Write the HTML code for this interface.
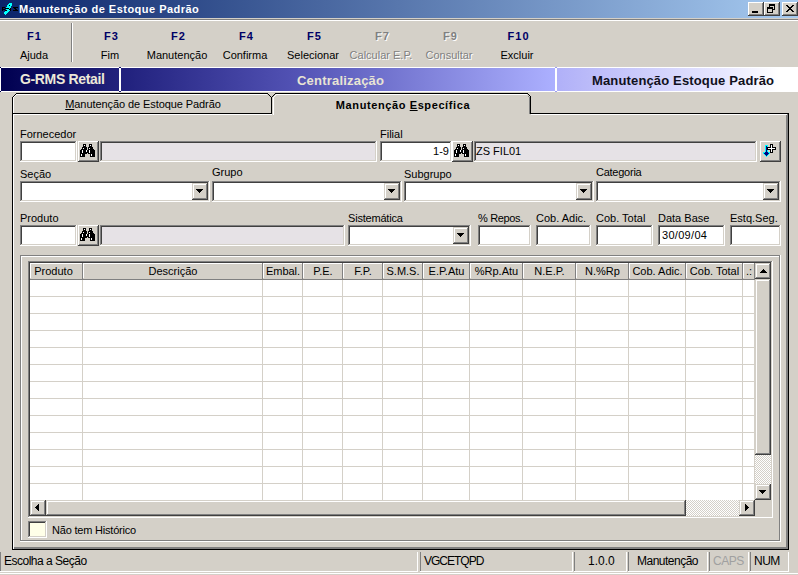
<!DOCTYPE html><html><head><meta charset="utf-8"><style>
html,body{margin:0;padding:0;}
body{width:798px;height:575px;overflow:hidden;position:relative;background:#d4d0c8;font-family:"Liberation Sans",sans-serif;font-size:11px;}
div,span,svg{position:absolute;}
.t{white-space:nowrap;line-height:13px;}
</style></head><body>
<div style="left:0;top:0;width:798px;height:18px;background:linear-gradient(to right,#0a246a 0%,#a6caf0 100%);"></div>
<div style="left:0px;top:18px;width:798px;height:1px;background:#d4d0c8;"></div>
<div style="left:0px;top:19px;width:798px;height:1px;background:#808080;"></div>
<div style="left:0px;top:20px;width:798px;height:1px;background:#ffffff;"></div>
<span class="t " style="left:19px;top:3px;font-size:11px;font-weight:bold;color:#fff;letter-spacing:0.48px;">Manutenção de Estoque Padrão</span>
<div style="left:9px;top:3px;width:3px;height:1px;background:#00ffff;"></div>
<div style="left:8px;top:4px;width:4px;height:1px;background:#00ffff;"></div>
<div style="left:7px;top:5px;width:2px;height:1px;background:#00ffff;"></div>
<div style="left:9px;top:5px;width:1px;height:1px;background:#000;"></div>
<div style="left:10px;top:5px;width:2px;height:1px;background:#00ffff;"></div>
<div style="left:7px;top:6px;width:4px;height:1px;background:#00ffff;"></div>
<div style="left:2px;top:7px;width:3px;height:1px;background:#000;"></div>
<div style="left:6px;top:7px;width:5px;height:1px;background:#00ffff;"></div>
<div style="left:13px;top:7px;width:5px;height:1px;background:#000;"></div>
<div style="left:2px;top:8px;width:1px;height:1px;background:#000;"></div>
<div style="left:5px;top:8px;width:1px;height:1px;background:#000;"></div>
<div style="left:6px;top:8px;width:3px;height:1px;background:#000;"></div>
<div style="left:9px;top:8px;width:1px;height:1px;background:#00ffff;"></div>
<div style="left:10px;top:8px;width:1px;height:1px;background:#000;"></div>
<div style="left:14px;top:8px;width:2px;height:1px;background:#000;"></div>
<div style="left:2px;top:9px;width:3px;height:1px;background:#000;"></div>
<div style="left:6px;top:9px;width:3px;height:1px;background:#00ffff;"></div>
<div style="left:9px;top:9px;width:2px;height:1px;background:#000;"></div>
<div style="left:15px;top:9px;width:2px;height:1px;background:#000;"></div>
<div style="left:2px;top:10px;width:1px;height:1px;background:#000;"></div>
<div style="left:5px;top:10px;width:1px;height:1px;background:#000;"></div>
<div style="left:6px;top:10px;width:1px;height:1px;background:#000;"></div>
<div style="left:7px;top:10px;width:3px;height:1px;background:#00ffff;"></div>
<div style="left:10px;top:10px;width:1px;height:1px;background:#000;"></div>
<div style="left:13px;top:10px;width:5px;height:1px;background:#000;"></div>
<div style="left:5px;top:11px;width:4px;height:1px;background:#00ffff;"></div>
<div style="left:4px;top:12px;width:4px;height:1px;background:#00ffff;"></div>
<div style="left:4px;top:13px;width:3px;height:1px;background:#00ffff;"></div>
<div style="left:5px;top:14px;width:1px;height:1px;background:#00ffff;"></div>
<div style="left:748px;top:2px;width:16px;height:14px;background:#404040;"></div>
<div style="left:748px;top:2px;width:15px;height:13px;background:#ffffff;"></div>
<div style="left:749px;top:3px;width:14px;height:12px;background:#808080;"></div>
<div style="left:749px;top:3px;width:13px;height:11px;background:#d4d0c8;"></div>
<div style="left:764px;top:2px;width:16px;height:14px;background:#404040;"></div>
<div style="left:764px;top:2px;width:15px;height:13px;background:#ffffff;"></div>
<div style="left:765px;top:3px;width:14px;height:12px;background:#808080;"></div>
<div style="left:765px;top:3px;width:13px;height:11px;background:#d4d0c8;"></div>
<div style="left:782px;top:2px;width:16px;height:14px;background:#404040;"></div>
<div style="left:782px;top:2px;width:15px;height:13px;background:#ffffff;"></div>
<div style="left:783px;top:3px;width:14px;height:12px;background:#808080;"></div>
<div style="left:783px;top:3px;width:13px;height:11px;background:#d4d0c8;"></div>
<div style="left:752px;top:11px;width:6px;height:1px;background:#000;"></div>
<div style="left:752px;top:12px;width:6px;height:1px;background:#000;"></div>
<div style="left:769px;top:4px;width:6px;height:1px;background:#000;"></div>
<div style="left:769px;top:5px;width:6px;height:1px;background:#000;"></div>
<div style="left:769px;top:6px;width:1px;height:1px;background:#000;"></div>
<div style="left:774px;top:6px;width:1px;height:1px;background:#000;"></div>
<div style="left:767px;top:7px;width:6px;height:1px;background:#000;"></div>
<div style="left:774px;top:7px;width:1px;height:1px;background:#000;"></div>
<div style="left:767px;top:8px;width:6px;height:1px;background:#000;"></div>
<div style="left:774px;top:8px;width:1px;height:1px;background:#000;"></div>
<div style="left:767px;top:9px;width:1px;height:1px;background:#000;"></div>
<div style="left:772px;top:9px;width:3px;height:1px;background:#000;"></div>
<div style="left:767px;top:10px;width:1px;height:1px;background:#000;"></div>
<div style="left:772px;top:10px;width:1px;height:1px;background:#000;"></div>
<div style="left:767px;top:11px;width:1px;height:1px;background:#000;"></div>
<div style="left:772px;top:11px;width:1px;height:1px;background:#000;"></div>
<div style="left:767px;top:12px;width:6px;height:1px;background:#000;"></div>
<div style="left:786px;top:5px;width:2px;height:1px;background:#000;"></div>
<div style="left:792px;top:5px;width:2px;height:1px;background:#000;"></div>
<div style="left:787px;top:6px;width:2px;height:1px;background:#000;"></div>
<div style="left:791px;top:6px;width:2px;height:1px;background:#000;"></div>
<div style="left:788px;top:7px;width:4px;height:1px;background:#000;"></div>
<div style="left:789px;top:8px;width:2px;height:1px;background:#000;"></div>
<div style="left:788px;top:9px;width:4px;height:1px;background:#000;"></div>
<div style="left:787px;top:10px;width:2px;height:1px;background:#000;"></div>
<div style="left:791px;top:10px;width:2px;height:1px;background:#000;"></div>
<div style="left:786px;top:11px;width:2px;height:1px;background:#000;"></div>
<div style="left:792px;top:11px;width:2px;height:1px;background:#000;"></div>
<span class="t" style="left:-6px;top:30px;width:80px;text-align:center;font-size:11px;font-weight:bold;color:#000066;letter-spacing:1.1px;text-indent:1.1px;">F1</span>
<span class="t" style="left:-6px;top:49px;width:80px;text-align:center;font-size:11px;font-weight:normal;color:#000;">Ajuda</span>
<span class="t" style="left:71px;top:30px;width:80px;text-align:center;font-size:11px;font-weight:bold;color:#000066;letter-spacing:1.1px;text-indent:1.1px;">F3</span>
<span class="t" style="left:70px;top:49px;width:80px;text-align:center;font-size:11px;font-weight:normal;color:#000;">Fim</span>
<span class="t" style="left:138px;top:30px;width:80px;text-align:center;font-size:11px;font-weight:bold;color:#000066;letter-spacing:1.1px;text-indent:1.1px;">F2</span>
<span class="t" style="left:137px;top:49px;width:80px;text-align:center;font-size:11px;font-weight:normal;color:#000;">Manutenção</span>
<span class="t" style="left:206px;top:30px;width:80px;text-align:center;font-size:11px;font-weight:bold;color:#000066;letter-spacing:1.1px;text-indent:1.1px;">F4</span>
<span class="t" style="left:205px;top:49px;width:80px;text-align:center;font-size:11px;font-weight:normal;color:#000;">Confirma</span>
<span class="t" style="left:274px;top:30px;width:80px;text-align:center;font-size:11px;font-weight:bold;color:#000066;letter-spacing:1.1px;text-indent:1.1px;">F5</span>
<span class="t" style="left:273px;top:49px;width:80px;text-align:center;font-size:11px;font-weight:normal;color:#000;">Selecionar</span>
<span class="t" style="left:343px;top:31px;width:80px;text-align:center;font-size:11px;font-weight:bold;color:#fff;letter-spacing:1.1px;text-indent:1.1px;">F7</span>
<span class="t" style="left:342px;top:30px;width:80px;text-align:center;font-size:11px;font-weight:bold;color:#808080;letter-spacing:1.1px;text-indent:1.1px;">F7</span>
<span class="t" style="left:342px;top:50px;width:80px;text-align:center;font-size:11px;font-weight:normal;color:#fff;">Calcular E.P.</span>
<span class="t" style="left:341px;top:49px;width:80px;text-align:center;font-size:11px;font-weight:normal;color:#808080;">Calcular E.P.</span>
<span class="t" style="left:411px;top:31px;width:80px;text-align:center;font-size:11px;font-weight:bold;color:#fff;letter-spacing:1.1px;text-indent:1.1px;">F9</span>
<span class="t" style="left:410px;top:30px;width:80px;text-align:center;font-size:11px;font-weight:bold;color:#808080;letter-spacing:1.1px;text-indent:1.1px;">F9</span>
<span class="t" style="left:410px;top:50px;width:80px;text-align:center;font-size:11px;font-weight:normal;color:#fff;">Consultar</span>
<span class="t" style="left:409px;top:49px;width:80px;text-align:center;font-size:11px;font-weight:normal;color:#808080;">Consultar</span>
<span class="t" style="left:478px;top:30px;width:80px;text-align:center;font-size:11px;font-weight:bold;color:#000066;letter-spacing:1.1px;text-indent:1.1px;">F10</span>
<span class="t" style="left:477px;top:49px;width:80px;text-align:center;font-size:11px;font-weight:normal;color:#000;">Excluir</span>
<div style="left:71px;top:23px;width:1px;height:39px;background:#808080;"></div>
<div style="left:72px;top:23px;width:1px;height:39px;background:#ffffff;"></div>
<div style="left:0px;top:67px;width:798px;height:1px;background:#ffffff;"></div>
<div style="left:0px;top:91px;width:798px;height:1px;background:#ffffff;"></div>
<div style="left:1px;top:68px;width:118px;height:23px;background:linear-gradient(to right,#000050,#22227c);"></div>
<div style="left:0px;top:68px;width:1px;height:23px;background:#ffffff;"></div>
<span class="t " style="left:20px;top:73px;font-size:14px;font-weight:bold;color:#ece8d8;letter-spacing:-0.35px;">G-RMS Retail</span>
<div style="left:119px;top:68px;width:2px;height:23px;background:#ffffff;"></div>
<div style="left:121px;top:68px;width:434px;height:23px;background:linear-gradient(to right,#20207c,#5252b4 40%,#acb0ff 100%);"></div>
<span class="t " style="left:297px;top:74px;font-size:13px;font-weight:bold;color:#e8e4d4;letter-spacing:0.2px;">Centralização</span>
<div style="left:555px;top:68px;width:2px;height:23px;background:#ffffff;"></div>
<div style="left:0px;top:67px;width:1px;height:1px;background:#000050;"></div>
<div style="left:0px;top:91px;width:1px;height:1px;background:#000050;"></div>
<div style="left:119px;top:67px;width:2px;height:1px;background:#1a1a70;"></div>
<div style="left:119px;top:91px;width:2px;height:1px;background:#1a1a70;"></div>
<div style="left:555px;top:67px;width:2px;height:1px;background:#a0a0f0;"></div>
<div style="left:555px;top:91px;width:2px;height:1px;background:#a0a0f0;"></div>
<div style="left:557px;top:68px;width:241px;height:23px;background:linear-gradient(to right,#b0b0f8,#e8e8ff 70%,#ffffff 92%);"></div>
<span class="t " style="left:592px;top:74px;font-size:13px;font-weight:bold;color:#101020;letter-spacing:0.15px;">Manutenção Estoque Padrão</span>
<div style="left:12px;top:97px;width:1px;height:453px;background:#000;"></div>
<div style="left:13px;top:97px;width:1px;height:452px;background:#ffffff;"></div>
<div style="left:12px;top:113px;width:260px;height:1px;background:#000;"></div>
<div style="left:14px;top:114px;width:258px;height:1px;background:#ffffff;"></div>
<div style="left:530px;top:113px;width:259px;height:1px;background:#000;"></div>
<div style="left:530px;top:114px;width:258px;height:1px;background:#ffffff;"></div>
<div style="left:788px;top:113px;width:1px;height:437px;background:#000;"></div>
<div style="left:787px;top:114px;width:1px;height:435px;background:#808080;"></div>
<div style="left:786px;top:115px;width:1px;height:434px;background:#808080;"></div>
<div style="left:12px;top:549px;width:777px;height:1px;background:#000;"></div>
<div style="left:14px;top:548px;width:774px;height:1px;background:#808080;"></div>
<div style="left:14px;top:547px;width:774px;height:1px;background:#808080;"></div>
<div style="left:16px;top:93px;width:252px;height:1px;background:#000;"></div>
<div style="left:16px;top:94px;width:251px;height:1px;background:#ffffff;"></div>
<div style="left:15px;top:94px;width:1px;height:1px;background:#000;"></div>
<div style="left:15px;top:95px;width:1px;height:1px;background:#ffffff;"></div>
<div style="left:14px;top:95px;width:1px;height:1px;background:#000;"></div>
<div style="left:14px;top:96px;width:1px;height:1px;background:#ffffff;"></div>
<div style="left:13px;top:96px;width:1px;height:1px;background:#000;"></div>
<div style="left:13px;top:97px;width:1px;height:1px;background:#ffffff;"></div>
<div style="left:271px;top:97px;width:1px;height:16px;background:#000;"></div>
<div style="left:268px;top:94px;width:1px;height:1px;background:#000;"></div>
<div style="left:269px;top:95px;width:1px;height:1px;background:#000;"></div>
<div style="left:270px;top:96px;width:1px;height:1px;background:#000;"></div>
<div style="left:272px;top:94px;width:259px;height:21px;background:#d4d0c8;"></div>
<div style="left:275px;top:93px;width:253px;height:1px;background:#000;"></div>
<div style="left:276px;top:94px;width:251px;height:1px;background:#ffffff;"></div>
<div style="left:274px;top:94px;width:1px;height:1px;background:#000;"></div>
<div style="left:275px;top:95px;width:1px;height:1px;background:#ffffff;"></div>
<div style="left:273px;top:95px;width:1px;height:1px;background:#000;"></div>
<div style="left:274px;top:96px;width:1px;height:1px;background:#ffffff;"></div>
<div style="left:272px;top:96px;width:1px;height:1px;background:#000;"></div>
<div style="left:273px;top:97px;width:1px;height:1px;background:#ffffff;"></div>
<div style="left:273px;top:97px;width:1px;height:18px;background:#ffffff;"></div>
<div style="left:528px;top:94px;width:1px;height:1px;background:#000;"></div>
<div style="left:529px;top:95px;width:1px;height:1px;background:#000;"></div>
<div style="left:530px;top:96px;width:1px;height:1px;background:#000;"></div>
<div style="left:530px;top:97px;width:1px;height:17px;background:#000;"></div>
<div style="left:529px;top:97px;width:1px;height:17px;background:#808080;"></div>
<div style="left:528px;top:96px;width:1px;height:1px;background:#808080;"></div>
<span class="t" style="left:18px;top:98px;width:250px;text-align:center;font-size:11px;font-weight:normal;color:#000;letter-spacing:-0.08px;"><u>M</u>anutenção de Estoque Padrão</span>
<span class="t" style="left:278px;top:99px;width:250px;text-align:center;font-size:11px;font-weight:bold;color:#000;letter-spacing:0.6px;">Manutenção <u>E</u>specífica</span>
<span class="t " style="left:20px;top:128px;font-size:11px;font-weight:normal;color:#000;">Fornecedor</span>
<span class="t " style="left:380px;top:128px;font-size:11px;font-weight:normal;color:#000;">Filial</span>
<div style="left:20px;top:141px;width:57px;height:21px;background:#ffffff;"></div>
<div style="left:20px;top:141px;width:56px;height:20px;background:#808080;"></div>
<div style="left:21px;top:142px;width:55px;height:19px;background:#d4d0c8;"></div>
<div style="left:21px;top:142px;width:54px;height:18px;background:#404040;"></div>
<div style="left:22px;top:143px;width:53px;height:17px;background:#fff;"></div>
<div style="left:78px;top:141px;width:21px;height:21px;background:#404040;"></div>
<div style="left:78px;top:141px;width:20px;height:20px;background:#ffffff;"></div>
<div style="left:79px;top:142px;width:19px;height:19px;background:#808080;"></div>
<div style="left:79px;top:142px;width:18px;height:18px;background:#d4d0c8;"></div>
<div style="left:83px;top:144px;width:3px;height:1px;background:#000;"></div>
<div style="left:89px;top:144px;width:3px;height:1px;background:#000;"></div>
<div style="left:83px;top:145px;width:1px;height:1px;background:#000;"></div>
<div style="left:84px;top:145px;width:1px;height:1px;background:#fff;"></div>
<div style="left:85px;top:145px;width:1px;height:1px;background:#000;"></div>
<div style="left:89px;top:145px;width:1px;height:1px;background:#000;"></div>
<div style="left:90px;top:145px;width:1px;height:1px;background:#fff;"></div>
<div style="left:91px;top:145px;width:1px;height:1px;background:#000;"></div>
<div style="left:83px;top:146px;width:3px;height:1px;background:#000;"></div>
<div style="left:89px;top:146px;width:3px;height:1px;background:#000;"></div>
<div style="left:82px;top:147px;width:5px;height:1px;background:#000;"></div>
<div style="left:88px;top:147px;width:5px;height:1px;background:#000;"></div>
<div style="left:82px;top:148px;width:1px;height:1px;background:#000;"></div>
<div style="left:83px;top:148px;width:1px;height:1px;background:#fff;"></div>
<div style="left:84px;top:148px;width:3px;height:1px;background:#000;"></div>
<div style="left:88px;top:148px;width:1px;height:1px;background:#000;"></div>
<div style="left:89px;top:148px;width:1px;height:1px;background:#fff;"></div>
<div style="left:90px;top:148px;width:3px;height:1px;background:#000;"></div>
<div style="left:81px;top:149px;width:6px;height:1px;background:#000;"></div>
<div style="left:88px;top:149px;width:6px;height:1px;background:#000;"></div>
<div style="left:80px;top:150px;width:2px;height:1px;background:#000;"></div>
<div style="left:82px;top:150px;width:1px;height:1px;background:#fff;"></div>
<div style="left:83px;top:150px;width:3px;height:1px;background:#000;"></div>
<div style="left:86px;top:150px;width:1px;height:1px;background:#fff;"></div>
<div style="left:87px;top:150px;width:2px;height:1px;background:#000;"></div>
<div style="left:89px;top:150px;width:1px;height:1px;background:#fff;"></div>
<div style="left:90px;top:150px;width:5px;height:1px;background:#000;"></div>
<div style="left:80px;top:151px;width:2px;height:1px;background:#000;"></div>
<div style="left:82px;top:151px;width:1px;height:1px;background:#fff;"></div>
<div style="left:83px;top:151px;width:3px;height:1px;background:#000;"></div>
<div style="left:86px;top:151px;width:1px;height:1px;background:#fff;"></div>
<div style="left:87px;top:151px;width:2px;height:1px;background:#000;"></div>
<div style="left:89px;top:151px;width:1px;height:1px;background:#fff;"></div>
<div style="left:90px;top:151px;width:5px;height:1px;background:#000;"></div>
<div style="left:80px;top:152px;width:2px;height:1px;background:#000;"></div>
<div style="left:82px;top:152px;width:1px;height:1px;background:#fff;"></div>
<div style="left:83px;top:152px;width:6px;height:1px;background:#000;"></div>
<div style="left:89px;top:152px;width:1px;height:1px;background:#fff;"></div>
<div style="left:90px;top:152px;width:5px;height:1px;background:#000;"></div>
<div style="left:80px;top:153px;width:7px;height:1px;background:#000;"></div>
<div style="left:88px;top:153px;width:7px;height:1px;background:#000;"></div>
<div style="left:80px;top:154px;width:1px;height:1px;background:#000;"></div>
<div style="left:81px;top:154px;width:1px;height:1px;background:#fff;"></div>
<div style="left:82px;top:154px;width:3px;height:1px;background:#000;"></div>
<div style="left:90px;top:154px;width:1px;height:1px;background:#000;"></div>
<div style="left:91px;top:154px;width:1px;height:1px;background:#fff;"></div>
<div style="left:92px;top:154px;width:3px;height:1px;background:#000;"></div>
<div style="left:80px;top:155px;width:1px;height:1px;background:#000;"></div>
<div style="left:81px;top:155px;width:1px;height:1px;background:#fff;"></div>
<div style="left:82px;top:155px;width:3px;height:1px;background:#000;"></div>
<div style="left:90px;top:155px;width:1px;height:1px;background:#000;"></div>
<div style="left:91px;top:155px;width:1px;height:1px;background:#fff;"></div>
<div style="left:92px;top:155px;width:3px;height:1px;background:#000;"></div>
<div style="left:80px;top:156px;width:5px;height:1px;background:#000;"></div>
<div style="left:90px;top:156px;width:5px;height:1px;background:#000;"></div>
<div style="left:100px;top:141px;width:277px;height:21px;background:#ffffff;"></div>
<div style="left:100px;top:141px;width:276px;height:20px;background:#808080;"></div>
<div style="left:101px;top:142px;width:275px;height:19px;background:#d4d0c8;"></div>
<div style="left:101px;top:142px;width:274px;height:18px;background:#404040;"></div>
<div style="left:102px;top:143px;width:273px;height:17px;background:#e6e2e6;"></div>
<div style="left:380px;top:141px;width:72px;height:21px;background:#ffffff;"></div>
<div style="left:380px;top:141px;width:71px;height:20px;background:#808080;"></div>
<div style="left:381px;top:142px;width:70px;height:19px;background:#d4d0c8;"></div>
<div style="left:381px;top:142px;width:69px;height:18px;background:#404040;"></div>
<div style="left:382px;top:143px;width:68px;height:17px;background:#fff;"></div>
<span class="t " style="left:420px;top:145px;font-size:11px;font-weight:normal;color:#000;width:29px;text-align:right;">1-9</span>
<div style="left:452px;top:141px;width:21px;height:21px;background:#404040;"></div>
<div style="left:452px;top:141px;width:20px;height:20px;background:#ffffff;"></div>
<div style="left:453px;top:142px;width:19px;height:19px;background:#808080;"></div>
<div style="left:453px;top:142px;width:18px;height:18px;background:#d4d0c8;"></div>
<div style="left:457px;top:144px;width:3px;height:1px;background:#000;"></div>
<div style="left:463px;top:144px;width:3px;height:1px;background:#000;"></div>
<div style="left:457px;top:145px;width:1px;height:1px;background:#000;"></div>
<div style="left:458px;top:145px;width:1px;height:1px;background:#fff;"></div>
<div style="left:459px;top:145px;width:1px;height:1px;background:#000;"></div>
<div style="left:463px;top:145px;width:1px;height:1px;background:#000;"></div>
<div style="left:464px;top:145px;width:1px;height:1px;background:#fff;"></div>
<div style="left:465px;top:145px;width:1px;height:1px;background:#000;"></div>
<div style="left:457px;top:146px;width:3px;height:1px;background:#000;"></div>
<div style="left:463px;top:146px;width:3px;height:1px;background:#000;"></div>
<div style="left:456px;top:147px;width:5px;height:1px;background:#000;"></div>
<div style="left:462px;top:147px;width:5px;height:1px;background:#000;"></div>
<div style="left:456px;top:148px;width:1px;height:1px;background:#000;"></div>
<div style="left:457px;top:148px;width:1px;height:1px;background:#fff;"></div>
<div style="left:458px;top:148px;width:3px;height:1px;background:#000;"></div>
<div style="left:462px;top:148px;width:1px;height:1px;background:#000;"></div>
<div style="left:463px;top:148px;width:1px;height:1px;background:#fff;"></div>
<div style="left:464px;top:148px;width:3px;height:1px;background:#000;"></div>
<div style="left:455px;top:149px;width:6px;height:1px;background:#000;"></div>
<div style="left:462px;top:149px;width:6px;height:1px;background:#000;"></div>
<div style="left:454px;top:150px;width:2px;height:1px;background:#000;"></div>
<div style="left:456px;top:150px;width:1px;height:1px;background:#fff;"></div>
<div style="left:457px;top:150px;width:3px;height:1px;background:#000;"></div>
<div style="left:460px;top:150px;width:1px;height:1px;background:#fff;"></div>
<div style="left:461px;top:150px;width:2px;height:1px;background:#000;"></div>
<div style="left:463px;top:150px;width:1px;height:1px;background:#fff;"></div>
<div style="left:464px;top:150px;width:5px;height:1px;background:#000;"></div>
<div style="left:454px;top:151px;width:2px;height:1px;background:#000;"></div>
<div style="left:456px;top:151px;width:1px;height:1px;background:#fff;"></div>
<div style="left:457px;top:151px;width:3px;height:1px;background:#000;"></div>
<div style="left:460px;top:151px;width:1px;height:1px;background:#fff;"></div>
<div style="left:461px;top:151px;width:2px;height:1px;background:#000;"></div>
<div style="left:463px;top:151px;width:1px;height:1px;background:#fff;"></div>
<div style="left:464px;top:151px;width:5px;height:1px;background:#000;"></div>
<div style="left:454px;top:152px;width:2px;height:1px;background:#000;"></div>
<div style="left:456px;top:152px;width:1px;height:1px;background:#fff;"></div>
<div style="left:457px;top:152px;width:6px;height:1px;background:#000;"></div>
<div style="left:463px;top:152px;width:1px;height:1px;background:#fff;"></div>
<div style="left:464px;top:152px;width:5px;height:1px;background:#000;"></div>
<div style="left:454px;top:153px;width:7px;height:1px;background:#000;"></div>
<div style="left:462px;top:153px;width:7px;height:1px;background:#000;"></div>
<div style="left:454px;top:154px;width:1px;height:1px;background:#000;"></div>
<div style="left:455px;top:154px;width:1px;height:1px;background:#fff;"></div>
<div style="left:456px;top:154px;width:3px;height:1px;background:#000;"></div>
<div style="left:464px;top:154px;width:1px;height:1px;background:#000;"></div>
<div style="left:465px;top:154px;width:1px;height:1px;background:#fff;"></div>
<div style="left:466px;top:154px;width:3px;height:1px;background:#000;"></div>
<div style="left:454px;top:155px;width:1px;height:1px;background:#000;"></div>
<div style="left:455px;top:155px;width:1px;height:1px;background:#fff;"></div>
<div style="left:456px;top:155px;width:3px;height:1px;background:#000;"></div>
<div style="left:464px;top:155px;width:1px;height:1px;background:#000;"></div>
<div style="left:465px;top:155px;width:1px;height:1px;background:#fff;"></div>
<div style="left:466px;top:155px;width:3px;height:1px;background:#000;"></div>
<div style="left:454px;top:156px;width:5px;height:1px;background:#000;"></div>
<div style="left:464px;top:156px;width:5px;height:1px;background:#000;"></div>
<div style="left:474px;top:141px;width:283px;height:21px;background:#ffffff;"></div>
<div style="left:474px;top:141px;width:282px;height:20px;background:#808080;"></div>
<div style="left:475px;top:142px;width:281px;height:19px;background:#d4d0c8;"></div>
<div style="left:475px;top:142px;width:280px;height:18px;background:#404040;"></div>
<div style="left:476px;top:143px;width:279px;height:17px;background:#e6e2e6;"></div>
<span class="t " style="left:476px;top:145px;font-size:11px;font-weight:normal;color:#000;">ZS FIL01</span>
<div style="left:760px;top:141px;width:21px;height:21px;background:#404040;"></div>
<div style="left:760px;top:141px;width:20px;height:20px;background:#ffffff;"></div>
<div style="left:761px;top:142px;width:19px;height:19px;background:#808080;"></div>
<div style="left:761px;top:142px;width:18px;height:18px;background:#d4d0c8;"></div>
<div style="left:765px;top:145px;width:3px;height:1px;background:#00ffff;"></div>
<div style="left:765px;top:146px;width:1px;height:1px;background:#00ffff;"></div>
<div style="left:766px;top:146px;width:1px;height:1px;background:#000080;"></div>
<div style="left:767px;top:146px;width:1px;height:1px;background:#00ffff;"></div>
<div style="left:765px;top:147px;width:1px;height:1px;background:#00ffff;"></div>
<div style="left:766px;top:147px;width:1px;height:1px;background:#000080;"></div>
<div style="left:767px;top:147px;width:1px;height:1px;background:#00ffff;"></div>
<div style="left:765px;top:148px;width:1px;height:1px;background:#00ffff;"></div>
<div style="left:766px;top:148px;width:1px;height:1px;background:#000080;"></div>
<div style="left:767px;top:148px;width:1px;height:1px;background:#00ffff;"></div>
<div style="left:765px;top:149px;width:1px;height:1px;background:#00ffff;"></div>
<div style="left:766px;top:149px;width:1px;height:1px;background:#000080;"></div>
<div style="left:767px;top:149px;width:1px;height:1px;background:#00ffff;"></div>
<div style="left:765px;top:150px;width:1px;height:1px;background:#00ffff;"></div>
<div style="left:766px;top:150px;width:1px;height:1px;background:#000080;"></div>
<div style="left:767px;top:150px;width:1px;height:1px;background:#00ffff;"></div>
<div style="left:765px;top:151px;width:1px;height:1px;background:#00ffff;"></div>
<div style="left:766px;top:151px;width:1px;height:1px;background:#000080;"></div>
<div style="left:767px;top:151px;width:1px;height:1px;background:#00ffff;"></div>
<div style="left:763px;top:152px;width:2px;height:1px;background:#00ffff;"></div>
<div style="left:765px;top:152px;width:3px;height:1px;background:#000080;"></div>
<div style="left:768px;top:152px;width:2px;height:1px;background:#00ffff;"></div>
<div style="left:763px;top:153px;width:1px;height:1px;background:#00ffff;"></div>
<div style="left:764px;top:153px;width:5px;height:1px;background:#000080;"></div>
<div style="left:769px;top:153px;width:1px;height:1px;background:#00ffff;"></div>
<div style="left:764px;top:154px;width:1px;height:1px;background:#00ffff;"></div>
<div style="left:765px;top:154px;width:3px;height:1px;background:#000080;"></div>
<div style="left:768px;top:154px;width:1px;height:1px;background:#00ffff;"></div>
<div style="left:765px;top:155px;width:1px;height:1px;background:#00ffff;"></div>
<div style="left:766px;top:155px;width:1px;height:1px;background:#000080;"></div>
<div style="left:767px;top:155px;width:1px;height:1px;background:#00ffff;"></div>
<div style="left:766px;top:156px;width:1px;height:1px;background:#00ffff;"></div>
<div style="left:770px;top:144px;width:3px;height:1px;background:#000;"></div>
<div style="left:770px;top:145px;width:1px;height:1px;background:#000;"></div>
<div style="left:771px;top:145px;width:1px;height:1px;background:#fff;"></div>
<div style="left:772px;top:145px;width:1px;height:1px;background:#000;"></div>
<div style="left:770px;top:146px;width:1px;height:1px;background:#000;"></div>
<div style="left:771px;top:146px;width:1px;height:1px;background:#fff;"></div>
<div style="left:772px;top:146px;width:1px;height:1px;background:#000;"></div>
<div style="left:767px;top:147px;width:4px;height:1px;background:#000;"></div>
<div style="left:771px;top:147px;width:1px;height:1px;background:#fff;"></div>
<div style="left:772px;top:147px;width:4px;height:1px;background:#000;"></div>
<div style="left:767px;top:148px;width:1px;height:1px;background:#000;"></div>
<div style="left:768px;top:148px;width:7px;height:1px;background:#fff;"></div>
<div style="left:775px;top:148px;width:1px;height:1px;background:#000;"></div>
<div style="left:767px;top:149px;width:4px;height:1px;background:#000;"></div>
<div style="left:771px;top:149px;width:1px;height:1px;background:#fff;"></div>
<div style="left:772px;top:149px;width:4px;height:1px;background:#000;"></div>
<div style="left:770px;top:150px;width:1px;height:1px;background:#000;"></div>
<div style="left:771px;top:150px;width:1px;height:1px;background:#fff;"></div>
<div style="left:772px;top:150px;width:1px;height:1px;background:#000;"></div>
<div style="left:770px;top:151px;width:1px;height:1px;background:#000;"></div>
<div style="left:771px;top:151px;width:1px;height:1px;background:#fff;"></div>
<div style="left:772px;top:151px;width:1px;height:1px;background:#000;"></div>
<div style="left:770px;top:152px;width:3px;height:1px;background:#000;"></div>
<span class="t " style="left:20px;top:168px;font-size:11px;font-weight:normal;color:#000;">Seção</span>
<span class="t " style="left:212px;top:166px;font-size:11px;font-weight:normal;color:#000;">Grupo</span>
<span class="t " style="left:404px;top:168px;font-size:11px;font-weight:normal;color:#000;">Subgrupo</span>
<span class="t " style="left:596px;top:166px;font-size:11px;font-weight:normal;color:#000;letter-spacing:-0.25px;">Categoria</span>
<div style="left:20px;top:181px;width:190px;height:21px;background:#ffffff;"></div>
<div style="left:20px;top:181px;width:189px;height:20px;background:#808080;"></div>
<div style="left:21px;top:182px;width:188px;height:19px;background:#d4d0c8;"></div>
<div style="left:21px;top:182px;width:187px;height:18px;background:#404040;"></div>
<div style="left:22px;top:183px;width:186px;height:17px;background:#fff;"></div>
<div style="left:192px;top:183px;width:16px;height:17px;background:#404040;"></div>
<div style="left:192px;top:183px;width:15px;height:16px;background:#d4d0c8;"></div>
<div style="left:193px;top:184px;width:14px;height:15px;background:#808080;"></div>
<div style="left:193px;top:184px;width:13px;height:14px;background:#ffffff;"></div>
<div style="left:194px;top:185px;width:12px;height:13px;background:#d4d0c8;"></div>
<div style="left:196px;top:189px;width:7px;height:1px;background:#000;"></div>
<div style="left:197px;top:190px;width:5px;height:1px;background:#000;"></div>
<div style="left:198px;top:191px;width:3px;height:1px;background:#000;"></div>
<div style="left:199px;top:192px;width:1px;height:1px;background:#000;"></div>
<div style="left:212px;top:181px;width:190px;height:21px;background:#ffffff;"></div>
<div style="left:212px;top:181px;width:189px;height:20px;background:#808080;"></div>
<div style="left:213px;top:182px;width:188px;height:19px;background:#d4d0c8;"></div>
<div style="left:213px;top:182px;width:187px;height:18px;background:#404040;"></div>
<div style="left:214px;top:183px;width:186px;height:17px;background:#fff;"></div>
<div style="left:384px;top:183px;width:16px;height:17px;background:#404040;"></div>
<div style="left:384px;top:183px;width:15px;height:16px;background:#d4d0c8;"></div>
<div style="left:385px;top:184px;width:14px;height:15px;background:#808080;"></div>
<div style="left:385px;top:184px;width:13px;height:14px;background:#ffffff;"></div>
<div style="left:386px;top:185px;width:12px;height:13px;background:#d4d0c8;"></div>
<div style="left:388px;top:189px;width:7px;height:1px;background:#000;"></div>
<div style="left:389px;top:190px;width:5px;height:1px;background:#000;"></div>
<div style="left:390px;top:191px;width:3px;height:1px;background:#000;"></div>
<div style="left:391px;top:192px;width:1px;height:1px;background:#000;"></div>
<div style="left:404px;top:181px;width:190px;height:21px;background:#ffffff;"></div>
<div style="left:404px;top:181px;width:189px;height:20px;background:#808080;"></div>
<div style="left:405px;top:182px;width:188px;height:19px;background:#d4d0c8;"></div>
<div style="left:405px;top:182px;width:187px;height:18px;background:#404040;"></div>
<div style="left:406px;top:183px;width:186px;height:17px;background:#fff;"></div>
<div style="left:576px;top:183px;width:16px;height:17px;background:#404040;"></div>
<div style="left:576px;top:183px;width:15px;height:16px;background:#d4d0c8;"></div>
<div style="left:577px;top:184px;width:14px;height:15px;background:#808080;"></div>
<div style="left:577px;top:184px;width:13px;height:14px;background:#ffffff;"></div>
<div style="left:578px;top:185px;width:12px;height:13px;background:#d4d0c8;"></div>
<div style="left:580px;top:189px;width:7px;height:1px;background:#000;"></div>
<div style="left:581px;top:190px;width:5px;height:1px;background:#000;"></div>
<div style="left:582px;top:191px;width:3px;height:1px;background:#000;"></div>
<div style="left:583px;top:192px;width:1px;height:1px;background:#000;"></div>
<div style="left:596px;top:181px;width:185px;height:21px;background:#ffffff;"></div>
<div style="left:596px;top:181px;width:184px;height:20px;background:#808080;"></div>
<div style="left:597px;top:182px;width:183px;height:19px;background:#d4d0c8;"></div>
<div style="left:597px;top:182px;width:182px;height:18px;background:#404040;"></div>
<div style="left:598px;top:183px;width:181px;height:17px;background:#fff;"></div>
<div style="left:763px;top:183px;width:16px;height:17px;background:#404040;"></div>
<div style="left:763px;top:183px;width:15px;height:16px;background:#d4d0c8;"></div>
<div style="left:764px;top:184px;width:14px;height:15px;background:#808080;"></div>
<div style="left:764px;top:184px;width:13px;height:14px;background:#ffffff;"></div>
<div style="left:765px;top:185px;width:12px;height:13px;background:#d4d0c8;"></div>
<div style="left:767px;top:189px;width:7px;height:1px;background:#000;"></div>
<div style="left:768px;top:190px;width:5px;height:1px;background:#000;"></div>
<div style="left:769px;top:191px;width:3px;height:1px;background:#000;"></div>
<div style="left:770px;top:192px;width:1px;height:1px;background:#000;"></div>
<span class="t " style="left:20px;top:212px;font-size:11px;font-weight:normal;color:#000;">Produto</span>
<span class="t " style="left:348px;top:212px;font-size:11px;font-weight:normal;color:#000;letter-spacing:-0.2px;">Sistemática</span>
<span class="t " style="left:478px;top:212px;font-size:11px;font-weight:normal;color:#000;letter-spacing:-0.35px;">% Repos.</span>
<span class="t " style="left:536px;top:212px;font-size:11px;font-weight:normal;color:#000;">Cob. Adic.</span>
<span class="t " style="left:596px;top:212px;font-size:11px;font-weight:normal;color:#000;">Cob. Total</span>
<span class="t " style="left:658px;top:212px;font-size:11px;font-weight:normal;color:#000;">Data Base</span>
<span class="t " style="left:730px;top:212px;font-size:11px;font-weight:normal;color:#000;">Estq.Seg.</span>
<div style="left:20px;top:225px;width:57px;height:21px;background:#ffffff;"></div>
<div style="left:20px;top:225px;width:56px;height:20px;background:#808080;"></div>
<div style="left:21px;top:226px;width:55px;height:19px;background:#d4d0c8;"></div>
<div style="left:21px;top:226px;width:54px;height:18px;background:#404040;"></div>
<div style="left:22px;top:227px;width:53px;height:17px;background:#fff;"></div>
<div style="left:78px;top:225px;width:21px;height:21px;background:#404040;"></div>
<div style="left:78px;top:225px;width:20px;height:20px;background:#ffffff;"></div>
<div style="left:79px;top:226px;width:19px;height:19px;background:#808080;"></div>
<div style="left:79px;top:226px;width:18px;height:18px;background:#d4d0c8;"></div>
<div style="left:83px;top:228px;width:3px;height:1px;background:#000;"></div>
<div style="left:89px;top:228px;width:3px;height:1px;background:#000;"></div>
<div style="left:83px;top:229px;width:1px;height:1px;background:#000;"></div>
<div style="left:84px;top:229px;width:1px;height:1px;background:#fff;"></div>
<div style="left:85px;top:229px;width:1px;height:1px;background:#000;"></div>
<div style="left:89px;top:229px;width:1px;height:1px;background:#000;"></div>
<div style="left:90px;top:229px;width:1px;height:1px;background:#fff;"></div>
<div style="left:91px;top:229px;width:1px;height:1px;background:#000;"></div>
<div style="left:83px;top:230px;width:3px;height:1px;background:#000;"></div>
<div style="left:89px;top:230px;width:3px;height:1px;background:#000;"></div>
<div style="left:82px;top:231px;width:5px;height:1px;background:#000;"></div>
<div style="left:88px;top:231px;width:5px;height:1px;background:#000;"></div>
<div style="left:82px;top:232px;width:1px;height:1px;background:#000;"></div>
<div style="left:83px;top:232px;width:1px;height:1px;background:#fff;"></div>
<div style="left:84px;top:232px;width:3px;height:1px;background:#000;"></div>
<div style="left:88px;top:232px;width:1px;height:1px;background:#000;"></div>
<div style="left:89px;top:232px;width:1px;height:1px;background:#fff;"></div>
<div style="left:90px;top:232px;width:3px;height:1px;background:#000;"></div>
<div style="left:81px;top:233px;width:6px;height:1px;background:#000;"></div>
<div style="left:88px;top:233px;width:6px;height:1px;background:#000;"></div>
<div style="left:80px;top:234px;width:2px;height:1px;background:#000;"></div>
<div style="left:82px;top:234px;width:1px;height:1px;background:#fff;"></div>
<div style="left:83px;top:234px;width:3px;height:1px;background:#000;"></div>
<div style="left:86px;top:234px;width:1px;height:1px;background:#fff;"></div>
<div style="left:87px;top:234px;width:2px;height:1px;background:#000;"></div>
<div style="left:89px;top:234px;width:1px;height:1px;background:#fff;"></div>
<div style="left:90px;top:234px;width:5px;height:1px;background:#000;"></div>
<div style="left:80px;top:235px;width:2px;height:1px;background:#000;"></div>
<div style="left:82px;top:235px;width:1px;height:1px;background:#fff;"></div>
<div style="left:83px;top:235px;width:3px;height:1px;background:#000;"></div>
<div style="left:86px;top:235px;width:1px;height:1px;background:#fff;"></div>
<div style="left:87px;top:235px;width:2px;height:1px;background:#000;"></div>
<div style="left:89px;top:235px;width:1px;height:1px;background:#fff;"></div>
<div style="left:90px;top:235px;width:5px;height:1px;background:#000;"></div>
<div style="left:80px;top:236px;width:2px;height:1px;background:#000;"></div>
<div style="left:82px;top:236px;width:1px;height:1px;background:#fff;"></div>
<div style="left:83px;top:236px;width:6px;height:1px;background:#000;"></div>
<div style="left:89px;top:236px;width:1px;height:1px;background:#fff;"></div>
<div style="left:90px;top:236px;width:5px;height:1px;background:#000;"></div>
<div style="left:80px;top:237px;width:7px;height:1px;background:#000;"></div>
<div style="left:88px;top:237px;width:7px;height:1px;background:#000;"></div>
<div style="left:80px;top:238px;width:1px;height:1px;background:#000;"></div>
<div style="left:81px;top:238px;width:1px;height:1px;background:#fff;"></div>
<div style="left:82px;top:238px;width:3px;height:1px;background:#000;"></div>
<div style="left:90px;top:238px;width:1px;height:1px;background:#000;"></div>
<div style="left:91px;top:238px;width:1px;height:1px;background:#fff;"></div>
<div style="left:92px;top:238px;width:3px;height:1px;background:#000;"></div>
<div style="left:80px;top:239px;width:1px;height:1px;background:#000;"></div>
<div style="left:81px;top:239px;width:1px;height:1px;background:#fff;"></div>
<div style="left:82px;top:239px;width:3px;height:1px;background:#000;"></div>
<div style="left:90px;top:239px;width:1px;height:1px;background:#000;"></div>
<div style="left:91px;top:239px;width:1px;height:1px;background:#fff;"></div>
<div style="left:92px;top:239px;width:3px;height:1px;background:#000;"></div>
<div style="left:80px;top:240px;width:5px;height:1px;background:#000;"></div>
<div style="left:90px;top:240px;width:5px;height:1px;background:#000;"></div>
<div style="left:100px;top:225px;width:245px;height:21px;background:#ffffff;"></div>
<div style="left:100px;top:225px;width:244px;height:20px;background:#808080;"></div>
<div style="left:101px;top:226px;width:243px;height:19px;background:#d4d0c8;"></div>
<div style="left:101px;top:226px;width:242px;height:18px;background:#404040;"></div>
<div style="left:102px;top:227px;width:241px;height:17px;background:#e6e2e6;"></div>
<div style="left:348px;top:225px;width:123px;height:21px;background:#ffffff;"></div>
<div style="left:348px;top:225px;width:122px;height:20px;background:#808080;"></div>
<div style="left:349px;top:226px;width:121px;height:19px;background:#d4d0c8;"></div>
<div style="left:349px;top:226px;width:120px;height:18px;background:#404040;"></div>
<div style="left:350px;top:227px;width:119px;height:17px;background:#fff;"></div>
<div style="left:453px;top:227px;width:16px;height:17px;background:#404040;"></div>
<div style="left:453px;top:227px;width:15px;height:16px;background:#d4d0c8;"></div>
<div style="left:454px;top:228px;width:14px;height:15px;background:#808080;"></div>
<div style="left:454px;top:228px;width:13px;height:14px;background:#ffffff;"></div>
<div style="left:455px;top:229px;width:12px;height:13px;background:#d4d0c8;"></div>
<div style="left:457px;top:233px;width:7px;height:1px;background:#000;"></div>
<div style="left:458px;top:234px;width:5px;height:1px;background:#000;"></div>
<div style="left:459px;top:235px;width:3px;height:1px;background:#000;"></div>
<div style="left:460px;top:236px;width:1px;height:1px;background:#000;"></div>
<div style="left:478px;top:225px;width:53px;height:21px;background:#ffffff;"></div>
<div style="left:478px;top:225px;width:52px;height:20px;background:#808080;"></div>
<div style="left:479px;top:226px;width:51px;height:19px;background:#d4d0c8;"></div>
<div style="left:479px;top:226px;width:50px;height:18px;background:#404040;"></div>
<div style="left:480px;top:227px;width:49px;height:17px;background:#fff;"></div>
<div style="left:536px;top:225px;width:55px;height:21px;background:#ffffff;"></div>
<div style="left:536px;top:225px;width:54px;height:20px;background:#808080;"></div>
<div style="left:537px;top:226px;width:53px;height:19px;background:#d4d0c8;"></div>
<div style="left:537px;top:226px;width:52px;height:18px;background:#404040;"></div>
<div style="left:538px;top:227px;width:51px;height:17px;background:#fff;"></div>
<div style="left:596px;top:225px;width:57px;height:21px;background:#ffffff;"></div>
<div style="left:596px;top:225px;width:56px;height:20px;background:#808080;"></div>
<div style="left:597px;top:226px;width:55px;height:19px;background:#d4d0c8;"></div>
<div style="left:597px;top:226px;width:54px;height:18px;background:#404040;"></div>
<div style="left:598px;top:227px;width:53px;height:17px;background:#fff;"></div>
<div style="left:658px;top:225px;width:67px;height:21px;background:#ffffff;"></div>
<div style="left:658px;top:225px;width:66px;height:20px;background:#808080;"></div>
<div style="left:659px;top:226px;width:65px;height:19px;background:#d4d0c8;"></div>
<div style="left:659px;top:226px;width:64px;height:18px;background:#404040;"></div>
<div style="left:660px;top:227px;width:63px;height:17px;background:#fff;"></div>
<span class="t " style="left:662px;top:229px;font-size:11px;font-weight:normal;color:#000;letter-spacing:0.3px;">30/09/04</span>
<div style="left:730px;top:225px;width:51px;height:21px;background:#ffffff;"></div>
<div style="left:730px;top:225px;width:50px;height:20px;background:#808080;"></div>
<div style="left:731px;top:226px;width:49px;height:19px;background:#d4d0c8;"></div>
<div style="left:731px;top:226px;width:48px;height:18px;background:#404040;"></div>
<div style="left:732px;top:227px;width:47px;height:17px;background:#fff;"></div>
<div style="left:20px;top:255px;width:760px;height:1px;background:#808080;"></div>
<div style="left:21px;top:256px;width:759px;height:1px;background:#ffffff;"></div>
<div style="left:20px;top:255px;width:1px;height:286px;background:#808080;"></div>
<div style="left:21px;top:256px;width:1px;height:285px;background:#ffffff;"></div>
<div style="left:779px;top:255px;width:1px;height:286px;background:#808080;"></div>
<div style="left:780px;top:255px;width:1px;height:287px;background:#ffffff;"></div>
<div style="left:20px;top:540px;width:760px;height:1px;background:#808080;"></div>
<div style="left:20px;top:541px;width:761px;height:1px;background:#ffffff;"></div>
<div style="left:28px;top:261px;width:745px;height:257px;background:#ffffff;"></div>
<div style="left:28px;top:261px;width:744px;height:256px;background:#808080;"></div>
<div style="left:29px;top:262px;width:743px;height:255px;background:#d4d0c8;"></div>
<div style="left:29px;top:262px;width:742px;height:254px;background:#404040;"></div>
<div style="left:30px;top:263px;width:741px;height:253px;background:#fff;"></div>
<div style="left:30px;top:263px;width:725px;height:17px;background:#d4d0c8;"></div>
<div style="left:30px;top:263px;width:52px;height:1px;background:#ffffff;"></div>
<div style="left:30px;top:263px;width:1px;height:15px;background:#ffffff;"></div>
<div style="left:82px;top:263px;width:1px;height:17px;background:#808080;"></div>
<span class="t" style="left:17px;top:265px;width:73px;text-align:center;font-size:11px;font-weight:normal;color:#000;">Produto</span>
<div style="left:83px;top:263px;width:179px;height:1px;background:#ffffff;"></div>
<div style="left:83px;top:263px;width:1px;height:15px;background:#ffffff;"></div>
<div style="left:262px;top:263px;width:1px;height:17px;background:#808080;"></div>
<span class="t" style="left:73px;top:265px;width:200px;text-align:center;font-size:11px;font-weight:normal;color:#000;">Descrição</span>
<div style="left:263px;top:263px;width:39px;height:1px;background:#ffffff;"></div>
<div style="left:263px;top:263px;width:1px;height:15px;background:#ffffff;"></div>
<div style="left:302px;top:263px;width:1px;height:17px;background:#808080;"></div>
<span class="t" style="left:253px;top:265px;width:60px;text-align:center;font-size:11px;font-weight:normal;color:#000;">Embal.</span>
<div style="left:303px;top:263px;width:39px;height:1px;background:#ffffff;"></div>
<div style="left:303px;top:263px;width:1px;height:15px;background:#ffffff;"></div>
<div style="left:342px;top:263px;width:1px;height:17px;background:#808080;"></div>
<span class="t" style="left:293px;top:265px;width:60px;text-align:center;font-size:11px;font-weight:normal;color:#000;">P.E.</span>
<div style="left:343px;top:263px;width:39px;height:1px;background:#ffffff;"></div>
<div style="left:343px;top:263px;width:1px;height:15px;background:#ffffff;"></div>
<div style="left:382px;top:263px;width:1px;height:17px;background:#808080;"></div>
<span class="t" style="left:333px;top:265px;width:60px;text-align:center;font-size:11px;font-weight:normal;color:#000;">F.P.</span>
<div style="left:383px;top:263px;width:39px;height:1px;background:#ffffff;"></div>
<div style="left:383px;top:263px;width:1px;height:15px;background:#ffffff;"></div>
<div style="left:422px;top:263px;width:1px;height:17px;background:#808080;"></div>
<span class="t" style="left:373px;top:265px;width:60px;text-align:center;font-size:11px;font-weight:normal;color:#000;">S.M.S.</span>
<div style="left:423px;top:263px;width:46px;height:1px;background:#ffffff;"></div>
<div style="left:423px;top:263px;width:1px;height:15px;background:#ffffff;"></div>
<div style="left:469px;top:263px;width:1px;height:17px;background:#808080;"></div>
<span class="t" style="left:413px;top:265px;width:67px;text-align:center;font-size:11px;font-weight:normal;color:#000;">E.P.Atu</span>
<div style="left:470px;top:263px;width:52px;height:1px;background:#ffffff;"></div>
<div style="left:470px;top:263px;width:1px;height:15px;background:#ffffff;"></div>
<div style="left:522px;top:263px;width:1px;height:17px;background:#808080;"></div>
<span class="t" style="left:460px;top:265px;width:73px;text-align:center;font-size:11px;font-weight:normal;color:#000;">%Rp.Atu</span>
<div style="left:523px;top:263px;width:52px;height:1px;background:#ffffff;"></div>
<div style="left:523px;top:263px;width:1px;height:15px;background:#ffffff;"></div>
<div style="left:575px;top:263px;width:1px;height:17px;background:#808080;"></div>
<span class="t" style="left:513px;top:265px;width:73px;text-align:center;font-size:11px;font-weight:normal;color:#000;">N.E.P.</span>
<div style="left:576px;top:263px;width:52px;height:1px;background:#ffffff;"></div>
<div style="left:576px;top:263px;width:1px;height:15px;background:#ffffff;"></div>
<div style="left:628px;top:263px;width:1px;height:17px;background:#808080;"></div>
<span class="t" style="left:566px;top:265px;width:73px;text-align:center;font-size:11px;font-weight:normal;color:#000;">N.%Rp</span>
<div style="left:629px;top:263px;width:56px;height:1px;background:#ffffff;"></div>
<div style="left:629px;top:263px;width:1px;height:15px;background:#ffffff;"></div>
<div style="left:685px;top:263px;width:1px;height:17px;background:#808080;"></div>
<span class="t" style="left:619px;top:265px;width:77px;text-align:center;font-size:11px;font-weight:normal;color:#000;">Cob. Adic.</span>
<div style="left:686px;top:263px;width:56px;height:1px;background:#ffffff;"></div>
<div style="left:686px;top:263px;width:1px;height:15px;background:#ffffff;"></div>
<div style="left:742px;top:263px;width:1px;height:17px;background:#808080;"></div>
<span class="t" style="left:676px;top:265px;width:77px;text-align:center;font-size:11px;font-weight:normal;color:#000;">Cob. Total</span>
<div style="left:743px;top:263px;width:11px;height:1px;background:#ffffff;"></div>
<div style="left:743px;top:263px;width:1px;height:15px;background:#ffffff;"></div>
<div style="left:754px;top:263px;width:1px;height:17px;background:#808080;"></div>
<span class="t" style="left:733px;top:265px;width:32px;text-align:center;font-size:11px;font-weight:normal;color:#000;">.:</span>
<div style="left:30px;top:279px;width:725px;height:1px;background:#808080;"></div>
<div style="left:30px;top:296px;width:725px;height:1px;background:#d4d0c8;"></div>
<div style="left:30px;top:313px;width:725px;height:1px;background:#d4d0c8;"></div>
<div style="left:30px;top:330px;width:725px;height:1px;background:#d4d0c8;"></div>
<div style="left:30px;top:347px;width:725px;height:1px;background:#d4d0c8;"></div>
<div style="left:30px;top:364px;width:725px;height:1px;background:#d4d0c8;"></div>
<div style="left:30px;top:381px;width:725px;height:1px;background:#d4d0c8;"></div>
<div style="left:30px;top:398px;width:725px;height:1px;background:#d4d0c8;"></div>
<div style="left:30px;top:415px;width:725px;height:1px;background:#d4d0c8;"></div>
<div style="left:30px;top:432px;width:725px;height:1px;background:#d4d0c8;"></div>
<div style="left:30px;top:449px;width:725px;height:1px;background:#d4d0c8;"></div>
<div style="left:30px;top:466px;width:725px;height:1px;background:#d4d0c8;"></div>
<div style="left:30px;top:483px;width:725px;height:1px;background:#d4d0c8;"></div>
<div style="left:82px;top:280px;width:1px;height:220px;background:#d4d0c8;"></div>
<div style="left:262px;top:280px;width:1px;height:220px;background:#d4d0c8;"></div>
<div style="left:302px;top:280px;width:1px;height:220px;background:#d4d0c8;"></div>
<div style="left:342px;top:280px;width:1px;height:220px;background:#d4d0c8;"></div>
<div style="left:382px;top:280px;width:1px;height:220px;background:#d4d0c8;"></div>
<div style="left:422px;top:280px;width:1px;height:220px;background:#d4d0c8;"></div>
<div style="left:469px;top:280px;width:1px;height:220px;background:#d4d0c8;"></div>
<div style="left:522px;top:280px;width:1px;height:220px;background:#d4d0c8;"></div>
<div style="left:575px;top:280px;width:1px;height:220px;background:#d4d0c8;"></div>
<div style="left:628px;top:280px;width:1px;height:220px;background:#d4d0c8;"></div>
<div style="left:685px;top:280px;width:1px;height:220px;background:#d4d0c8;"></div>
<div style="left:742px;top:280px;width:1px;height:220px;background:#d4d0c8;"></div>
<div style="left:754px;top:280px;width:1px;height:220px;background:#d4d0c8;"></div>
<div style="left:755px;top:263px;width:16px;height:16px;background:#404040;"></div>
<div style="left:755px;top:263px;width:15px;height:15px;background:#d4d0c8;"></div>
<div style="left:756px;top:264px;width:14px;height:14px;background:#808080;"></div>
<div style="left:756px;top:264px;width:13px;height:13px;background:#ffffff;"></div>
<div style="left:757px;top:265px;width:12px;height:12px;background:#d4d0c8;"></div>
<div style="left:763px;top:269px;width:1px;height:1px;background:#000;"></div>
<div style="left:762px;top:270px;width:3px;height:1px;background:#000;"></div>
<div style="left:761px;top:271px;width:5px;height:1px;background:#000;"></div>
<div style="left:760px;top:272px;width:7px;height:1px;background:#000;"></div>
<div style="left:755px;top:279px;width:16px;height:176px;background:#404040;"></div>
<div style="left:755px;top:279px;width:15px;height:175px;background:#d4d0c8;"></div>
<div style="left:756px;top:280px;width:14px;height:174px;background:#808080;"></div>
<div style="left:756px;top:280px;width:13px;height:173px;background:#ffffff;"></div>
<div style="left:757px;top:281px;width:12px;height:172px;background:#d4d0c8;"></div>
<div style="left:755px;top:455px;width:16px;height:29px;background-image:repeating-conic-gradient(#fff 0 25%,#d4d0c8 0 50%);background-size:2px 2px;"></div>
<div style="left:755px;top:484px;width:16px;height:16px;background:#404040;"></div>
<div style="left:755px;top:484px;width:15px;height:15px;background:#d4d0c8;"></div>
<div style="left:756px;top:485px;width:14px;height:14px;background:#808080;"></div>
<div style="left:756px;top:485px;width:13px;height:13px;background:#ffffff;"></div>
<div style="left:757px;top:486px;width:12px;height:12px;background:#d4d0c8;"></div>
<div style="left:759px;top:490px;width:7px;height:1px;background:#000;"></div>
<div style="left:760px;top:491px;width:5px;height:1px;background:#000;"></div>
<div style="left:761px;top:492px;width:3px;height:1px;background:#000;"></div>
<div style="left:762px;top:493px;width:1px;height:1px;background:#000;"></div>
<div style="left:30px;top:500px;width:16px;height:16px;background:#404040;"></div>
<div style="left:30px;top:500px;width:15px;height:15px;background:#d4d0c8;"></div>
<div style="left:31px;top:501px;width:14px;height:14px;background:#808080;"></div>
<div style="left:31px;top:501px;width:13px;height:13px;background:#ffffff;"></div>
<div style="left:32px;top:502px;width:12px;height:12px;background:#d4d0c8;"></div>
<div style="left:38px;top:504px;width:1px;height:1px;background:#000;"></div>
<div style="left:37px;top:505px;width:2px;height:1px;background:#000;"></div>
<div style="left:36px;top:506px;width:3px;height:1px;background:#000;"></div>
<div style="left:35px;top:507px;width:4px;height:1px;background:#000;"></div>
<div style="left:36px;top:508px;width:3px;height:1px;background:#000;"></div>
<div style="left:37px;top:509px;width:2px;height:1px;background:#000;"></div>
<div style="left:38px;top:510px;width:1px;height:1px;background:#000;"></div>
<div style="left:46px;top:500px;width:640px;height:16px;background:#404040;"></div>
<div style="left:46px;top:500px;width:639px;height:15px;background:#d4d0c8;"></div>
<div style="left:47px;top:501px;width:638px;height:14px;background:#808080;"></div>
<div style="left:47px;top:501px;width:637px;height:13px;background:#ffffff;"></div>
<div style="left:48px;top:502px;width:636px;height:12px;background:#d4d0c8;"></div>
<div style="left:686px;top:500px;width:53px;height:16px;background-image:repeating-conic-gradient(#fff 0 25%,#d4d0c8 0 50%);background-size:2px 2px;"></div>
<div style="left:739px;top:500px;width:16px;height:16px;background:#404040;"></div>
<div style="left:739px;top:500px;width:15px;height:15px;background:#d4d0c8;"></div>
<div style="left:740px;top:501px;width:14px;height:14px;background:#808080;"></div>
<div style="left:740px;top:501px;width:13px;height:13px;background:#ffffff;"></div>
<div style="left:741px;top:502px;width:12px;height:12px;background:#d4d0c8;"></div>
<div style="left:745px;top:504px;width:1px;height:1px;background:#000;"></div>
<div style="left:745px;top:505px;width:2px;height:1px;background:#000;"></div>
<div style="left:745px;top:506px;width:3px;height:1px;background:#000;"></div>
<div style="left:745px;top:507px;width:4px;height:1px;background:#000;"></div>
<div style="left:745px;top:508px;width:3px;height:1px;background:#000;"></div>
<div style="left:745px;top:509px;width:2px;height:1px;background:#000;"></div>
<div style="left:745px;top:510px;width:1px;height:1px;background:#000;"></div>
<div style="left:755px;top:500px;width:16px;height:16px;background:#d4d0c8;"></div>
<div style="left:28px;top:521px;width:19px;height:17px;background:#ffffff;"></div>
<div style="left:28px;top:521px;width:18px;height:16px;background:#808080;"></div>
<div style="left:29px;top:522px;width:17px;height:15px;background:#d4d0c8;"></div>
<div style="left:29px;top:522px;width:16px;height:14px;background:#404040;"></div>
<div style="left:30px;top:523px;width:15px;height:13px;background:#ffffe8;"></div>
<span class="t " style="left:52px;top:524px;font-size:11px;font-weight:normal;color:#000;letter-spacing:-0.2px;">Não tem Histórico</span>
<div style="left:0px;top:550px;width:798px;height:25px;background:#d4d0c8;"></div>
<div style="left:0px;top:552px;width:418px;height:20px;background:#ffffff;"></div>
<div style="left:0px;top:552px;width:417px;height:19px;background:#808080;"></div>
<div style="left:1px;top:552px;width:416px;height:19px;background:#d4d0c8;"></div>
<div style="left:420px;top:552px;width:153px;height:20px;background:#ffffff;"></div>
<div style="left:420px;top:552px;width:152px;height:19px;background:#808080;"></div>
<div style="left:421px;top:552px;width:151px;height:19px;background:#d4d0c8;"></div>
<div style="left:574px;top:552px;width:53px;height:20px;background:#ffffff;"></div>
<div style="left:574px;top:552px;width:52px;height:19px;background:#808080;"></div>
<div style="left:575px;top:552px;width:51px;height:19px;background:#d4d0c8;"></div>
<div style="left:628px;top:552px;width:80px;height:20px;background:#ffffff;"></div>
<div style="left:628px;top:552px;width:79px;height:19px;background:#808080;"></div>
<div style="left:629px;top:552px;width:78px;height:19px;background:#d4d0c8;"></div>
<div style="left:709px;top:552px;width:40px;height:20px;background:#ffffff;"></div>
<div style="left:709px;top:552px;width:39px;height:19px;background:#808080;"></div>
<div style="left:710px;top:552px;width:38px;height:19px;background:#d4d0c8;"></div>
<div style="left:750px;top:552px;width:39px;height:20px;background:#ffffff;"></div>
<div style="left:750px;top:552px;width:38px;height:19px;background:#808080;"></div>
<div style="left:751px;top:552px;width:37px;height:19px;background:#d4d0c8;"></div>
<span class="t " style="left:4px;top:555px;font-size:12px;font-weight:normal;color:#000;letter-spacing:-0.5px;">Escolha a Seção</span>
<span class="t " style="left:424px;top:555px;font-size:12px;font-weight:normal;color:#000;letter-spacing:-1px;">VGCETQPD</span>
<span class="t " style="left:588px;top:555px;font-size:12px;font-weight:normal;color:#000;letter-spacing:0px;">1.0.0</span>
<span class="t " style="left:637px;top:555px;font-size:12px;font-weight:normal;color:#000;letter-spacing:-0.5px;">Manutenção</span>
<span class="t " style="left:713px;top:555px;font-size:12px;font-weight:normal;color:#a0a0a0;letter-spacing:-0.5px;">CAPS</span>
<span class="t " style="left:754px;top:555px;font-size:12px;font-weight:normal;color:#000;letter-spacing:-0.5px;">NUM</span>
<div style="left:0px;top:573px;width:798px;height:1px;background:#fff;"></div>
</body></html>
